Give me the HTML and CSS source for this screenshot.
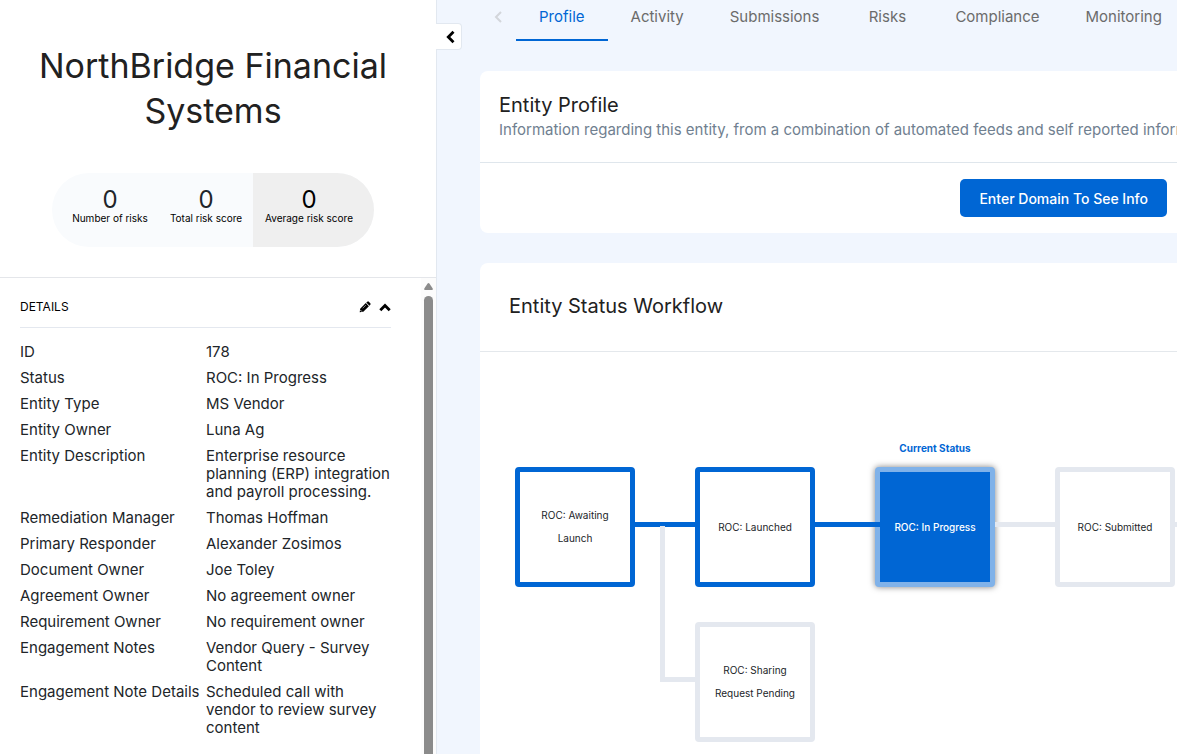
FILE: index.html
```
<!DOCTYPE html>
<html lang="en">
<head>
  <meta charset="UTF-8">
  <meta name="viewport" content="width=device-width, initial-scale=1">
  <title>NorthBridge Financial Systems</title>
  <link rel="stylesheet" href="styles.css">
</head>
<body>
  <div class="layout">
    <aside class="sidebar">
      <header class="entity-header">
        <h1>NorthBridge Financial Systems</h1>
        <div class="stats">
          <div class="stat"><strong>0</strong><span>Number of risks</span></div>
          <div class="stat"><strong>0</strong><span>Total risk score</span></div>
          <button type="button" class="stat stat-active"><strong>0</strong><span>Average risk score</span></button>
        </div>
      </header>

      <div class="details-scroll">
        <section class="details">
          <div class="details-title">
            <h2>DETAILS</h2>
            <button type="button" class="icon-btn" aria-label="Edit details">
              <svg width="12" height="12" viewBox="0 0 12 12">
                <path d="M1.2 7.7 6.8 2.1l3.1 3.1-5.6 5.6L.7 11.3z"/>
                <path d="M7.3 1.6 8.3.7q.8-.7 1.5 0l1.5 1.5q.7.7 0 1.5l-.9 1z"/>
                <path d="M3.7 7.3 6.9 4.100" stroke="#fff" stroke-width=".5" fill="none"/>
                <path d="M1.500 9.200 2.800 10.500" stroke="#fff" stroke-width=".9" fill="none"/>
              </svg>
            </button>
            <button type="button" class="icon-btn" aria-label="Collapse details">
              <svg width="12" height="12" viewBox="0 0 12 12">
                <path d="M1.300 9.300 6 4.600l4.700 4.700" fill="none" stroke="#000" stroke-width="2.8"/>
              </svg>
            </button>
          </div>
          <dl class="details-list">
            <dt>ID</dt><dd>178</dd>
            <dt>Status</dt><dd>ROC: In Progress</dd>
            <dt>Entity Type</dt><dd>MS Vendor</dd>
            <dt>Entity Owner</dt><dd>Luna Ag</dd>
            <dt>Entity Description</dt><dd>Enterprise resource<br>planning (ERP) integration<br>and payroll processing.</dd>
            <dt>Remediation Manager</dt><dd>Thomas Hoffman</dd>
            <dt>Primary Responder</dt><dd>Alexander Zosimos</dd>
            <dt>Document Owner</dt><dd>Joe Toley</dd>
            <dt>Agreement Owner</dt><dd>No agreement owner</dd>
            <dt>Requirement Owner</dt><dd>No requirement owner</dd>
            <dt>Engagement Notes</dt><dd>Vendor Query - Survey<br>Content</dd>
            <dt>Engagement Note Details</dt><dd>Scheduled call with<br>vendor to review survey<br>content</dd>
          </dl>
        </section>
        <div class="scrollbar">
          <svg width="9" height="7" viewBox="0 0 9 7"><path d="M3.6.6q.9-1.2 1.8 0L8.7 5.4Q9.2 7 8 7H1Q-.2 7 .3 5.4z" fill="#8b8b8b"/></svg>
          <div class="scrollbar-thumb"></div>
        </div>
      </div>
    </aside>

    <main class="content">
      <button type="button" class="collapse-btn" aria-label="Collapse sidebar">
        <svg width="10" height="14" viewBox="0 0 10 14">
          <path d="M8.500 1.800 3.300 7l5.200 5.200" fill="none" stroke="#000" stroke-width="2.8"/>
        </svg>
      </button>

      <nav class="tabs">
        <button type="button" class="tabs-arrow" aria-label="Previous tabs" disabled>
          <svg width="8" height="12" viewBox="0 0 8 12">
            <path d="M7 1 2 6l5 5" fill="none" stroke="#d3d6db" stroke-width="2"/>
          </svg>
        </button>
        <a href="#profile" class="tab active">Profile</a>
        <a href="#activity" class="tab">Activity</a>
        <a href="#submissions" class="tab">Submissions</a>
        <a href="#risks" class="tab">Risks</a>
        <a href="#compliance" class="tab">Compliance</a>
        <a href="#monitoring" class="tab">Monitoring</a>
      </nav>

      <section class="card">
        <div class="card-header">
          <h2>Entity Profile</h2>
          <p>Information regarding this entity, from a combination of automated feeds and self reported information</p>
        </div>
        <div class="card-actions">
          <button type="button" class="btn-primary">Enter Domain To See Info</button>
        </div>
      </section>

      <section class="card workflow">
        <div class="workflow-header">
          <h2>Entity Status Workflow</h2>
        </div>
        <div class="canvas">
          <div class="node node-awaiting done">ROC: Awaiting Launch</div>
          <div class="node node-launched done">ROC: Launched</div>
          <div class="current-label">Current Status</div>
          <div class="node node-progress current">ROC: In Progress</div>
          <div class="node node-submitted">ROC: Submitted</div>
          <div class="node node-sharing">ROC: Sharing Request Pending</div>
          <svg class="links" width="100%" height="100%" fill="none" stroke-width="5">
            <path d="M155 172.500H215M335 172.500H400" stroke="#0066d4"/>
            <path d="M182.500 174V327.500H215M515 172.500H575M695 172.500H755" stroke="#e4e8ef"/>
          </svg>
        </div>
      </section>
    </main>
  </div>
</body>
</html>
```
FILE: styles.css
```
* {
  box-sizing: border-box;
}

body {
  margin: 0;
  font-family: Inter, "Open Sans", sans-serif;
  font-size: 15px;
  color: #212529;
  background: #f1f6fe;
}

h1, h2, p, dl, dd {
  margin: 0;
  font-weight: 400;
}

button {
  font-family: inherit;
  border: none;
  padding: 0;
  cursor: pointer;
}

svg {
  display: block;
}

.layout {
  display: flex;
  height: 100vh;
  overflow: hidden;
}

/* Sidebar */
.sidebar {
  flex: 0 0 437px;
  display: flex;
  flex-direction: column;
  background: #fff;
  border-right: 1px solid #e2e8f0;
}

.entity-header {
  padding: 43px 10px 30px 0;
  border-bottom: 1px solid #e4e6ea;
  text-align: center;
}

.entity-header h1 {
  padding: 0 30px;
  font-size: 34px;
  line-height: 45px;
  color: #212121;
}

.stats {
  display: grid;
  grid-template-columns: 107px 94px 121px;
  width: max-content;
  height: 74px;
  margin: 40px auto 0;
  border-radius: 37px;
  overflow: hidden;
  background: #f9fbfd;
}

.stat {
  display: flex;
  flex-direction: column;
  align-items: center;
  padding: 15px 0 0;
}

.stat:first-child {
  padding-left: 9px;
}

.stat strong {
  font-size: 24px;
  line-height: 24px;
  font-weight: 400;
}

.stat span {
  font-size: 10px;
  line-height: 12px;
  color: #000;
  white-space: nowrap;
}

.stat-active {
  padding-right: 9px;
  background: #efefef;
  color: #000;
}

.details-scroll {
  flex: 1;
  display: flex;
  min-height: 0;
  overflow: hidden;
}

.details {
  flex: 1;
  padding: 0 30px 20px 20px;
}

.details-title {
  display: flex;
  align-items: center;
  gap: 8px;
  height: 50px;
  padding-top: 8px;
  border-bottom: 1px solid #e4e8ef;
}

.details-title h2 {
  flex: 1;
  font-size: 12px;
  color: #000;
}

.icon-btn {
  background: none;
}

.details-list {
  display: grid;
  grid-template-columns: 178px 1fr;
  gap: 8px;
  padding-top: 15px;
  line-height: 18px;
  white-space: nowrap;
}

.scrollbar {
  display: flex;
  flex-direction: column;
  align-items: center;
  gap: 6px;
  width: 15px;
  padding-top: 5px;
  background: #fcfcfc;
}

.scrollbar-thumb {
  flex: 1;
  width: 9px;
  border-radius: 5px 5px 0 0;
  background: #8b8b8b;
}

/* Main column */
.content {
  position: relative;
  flex: 1;
  min-width: 0;
  padding-left: 43px;
}

.collapse-btn {
  position: absolute;
  top: 23px;
  left: -1px;
  display: flex;
  align-items: center;
  justify-content: center;
  width: 26px;
  height: 27px;
  padding-left: 2px;
  border: 1px solid #e2e8f0;
  border-left: none;
  border-radius: 0 4px 4px 0;
  background: #fff;
}

.tabs {
  display: flex;
  height: 41px;
  overflow: hidden;
}

.tabs-arrow {
  display: flex;
  justify-content: center;
  flex: 0 0 36px;
  padding-top: 11px;
  background: none;
}

.tab {
  flex: none;
  min-width: 90px;
  padding: 0 23px;
  line-height: 34px;
  text-align: center;
  text-decoration: none;
  color: #6b6b6b;
}

.tab.active {
  color: #0066d4;
  border-bottom: 2px solid #0066d4;
}

.card {
  margin-top: 30px;
  border-radius: 8px 0 0 8px;
  background: #fff;
  overflow: hidden;
}

.card h2 {
  font-size: 20px;
  line-height: 28px;
  color: #212121;
}

.card-header {
  padding: 20px 0 21px 19px;
  border-bottom: 1px solid #dfe6ec;
}

.card-header p {
  line-height: 22px;
  color: #708090;
  white-space: nowrap;
}

.card-actions {
  display: flex;
  justify-content: flex-end;
  padding: 16px 10px;
}

.btn-primary {
  height: 38px;
  padding: 0 19px;
  border-radius: 5px;
  background: #0066d4;
  color: #fff;
  font-size: 14px;
  font-weight: 500;
}

.workflow {
  border-bottom-left-radius: 0;
}

.workflow-header {
  padding: 29px 29px 31px;
  border-bottom: 1px solid #e4e8ec;
}

/* Workflow diagram */
.canvas {
  position: relative;
  height: 460px;
}

.links {
  position: absolute;
  top: 0;
  left: 0;
}

.node {
  position: absolute;
  display: flex;
  align-items: center;
  justify-content: center;
  width: 120px;
  height: 120px;
  padding: 0 10px;
  border: 5px solid #e4e8ef;
  border-radius: 4px;
  background: #fff;
  font-size: 10px;
  line-height: 23px;
  text-align: center;
}

.node.done {
  border-color: #0066d4;
}

.node.current {
  border-color: #80b2e9;
  background: #0066d4;
  color: #fff;
  font-weight: 500;
  box-shadow: 0 0 6px rgba(0, 0, 0, 0.5);
}

.node-awaiting { top: 115px; left: 35px; }
.node-launched { top: 115px; left: 215px; }
.node-progress { top: 115px; left: 395px; }
.node-submitted { top: 115px; left: 575px; }
.node-sharing { top: 270px; left: 215px; }

.current-label {
  position: absolute;
  top: 89px;
  left: 395px;
  width: 120px;
  font-size: 10px;
  font-weight: 700;
  line-height: 14px;
  text-align: center;
  color: #0066d4;
}
```
